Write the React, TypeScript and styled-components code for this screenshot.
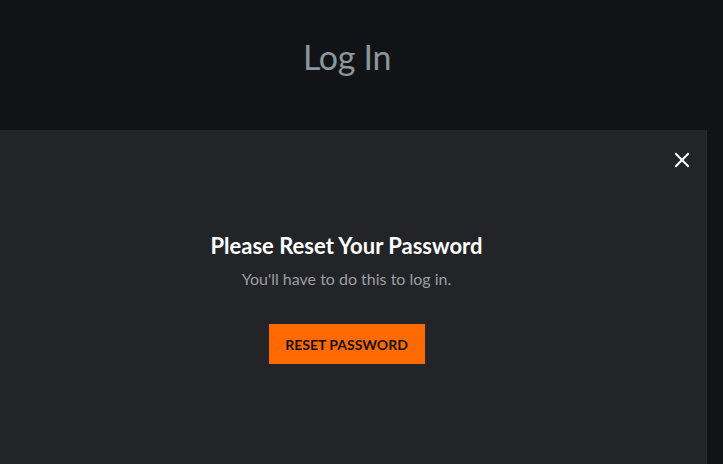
import styled, { createGlobalStyle } from 'styled-components';

const GlobalStyle = createGlobalStyle`
  html, body {
    margin: 0;
    padding: 0;
    background: #111316;
    font-family: Lato, "Noto Sans", sans-serif;
  }
`;

const StyledPage = styled.div`
  position: relative;
  width: 100%;
  height: 464px;
  overflow: hidden;
  background: #111316;
`;

const StyledHeader = styled.header`
  display: flex;
  justify-content: center;
  padding: 35px 29px 0 0;
`;

const StyledPageTitle = styled.h1`
  margin: 0;
  font-size: 34px;
  font-weight: 400;
  line-height: 44px;
  letter-spacing: -0.3px;
  color: #8b969d;
`;

const StyledModal = styled.div`
  position: absolute;
  top: 130px;
  left: 0;
  bottom: 0;
  width: 707px;
  box-sizing: border-box;
  background: #232428;
  border-right: 1px solid #2b2d31;
  display: flex;
  flex-direction: column;
  align-items: center;
  padding: 102px 13px 0 0;
`;

const StyledClose = styled.button`
  position: absolute;
  top: 16px;
  right: 10px;
  width: 28px;
  height: 28px;
  padding: 0;
  border: none;
  background: none;
  display: flex;
  align-items: center;
  justify-content: center;
  cursor: pointer;
`;

const StyledHeading = styled.h2`
  margin: 0;
  font-size: 22px;
  font-weight: 700;
  line-height: 28px;
  color: #ffffff;
`;

const StyledText = styled.p`
  margin: 8px 0 0;
  font-size: 16px;
  line-height: 22px;
  color: #9b9ea4;
`;

const StyledButton = styled.button`
  margin-top: 34px;
  width: 156px;
  height: 40px;
  border: none;
  background: #ff6a00;
  color: #111111;
  font-family: Lato, "Noto Sans", sans-serif;
  font-size: 14px;
  font-weight: 700;
  cursor: pointer;
`;

function App(): JSX.Element {
  return (
    <StyledPage>
      <GlobalStyle />
      <StyledHeader>
        <StyledPageTitle>Log In</StyledPageTitle>
      </StyledHeader>
      <StyledModal role="dialog">
        <StyledClose aria-label="Close">
          <svg width="16" height="16" viewBox="0 0 16 16">
            <path
              d="M2 2 L14 14 M14 2 L2 14"
              stroke="#ffffff"
              strokeWidth="2"
              strokeLinecap="square"
            />
          </svg>
        </StyledClose>
        <StyledHeading>Please Reset Your Password</StyledHeading>
        <StyledText>You'll have to do this to log in.</StyledText>
        <StyledButton>RESET PASSWORD</StyledButton>
      </StyledModal>
    </StyledPage>
  );
}

export default App;
